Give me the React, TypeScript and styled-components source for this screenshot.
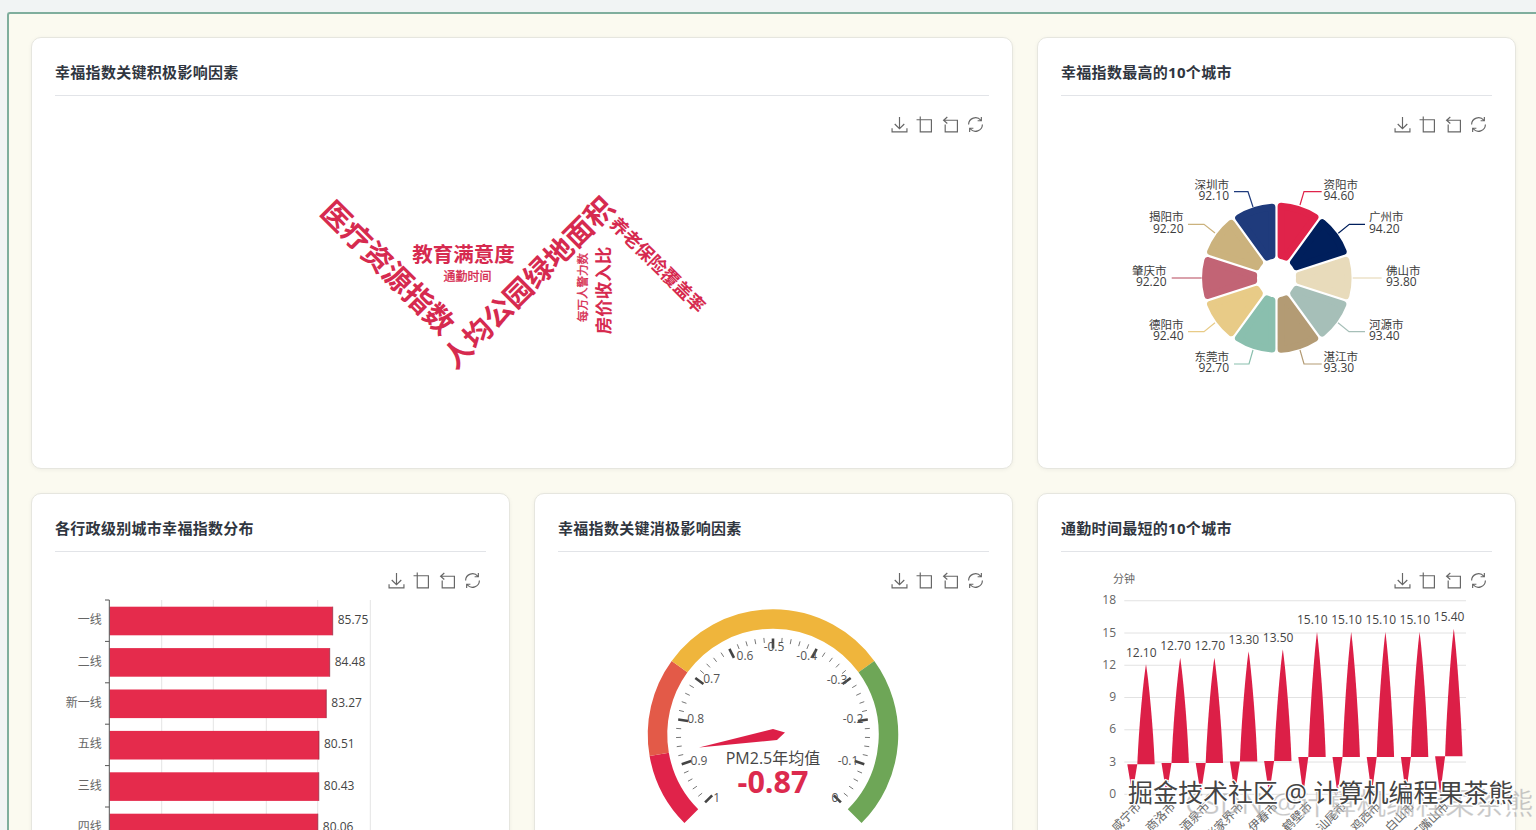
import styled, { createGlobalStyle } from 'styled-components';

const GlobalStyle = createGlobalStyle`
  html, body {
    margin: 0;
    height: 830px;
    overflow: hidden;
    background: #f1f4f4;
    font-family: "Open Sans", "Noto Sans CJK SC", sans-serif;
  }
`;

const Frame = styled.div`
  position: relative;
  margin: 12px 0 0 7px;
  height: 818px;
  overflow: hidden;
  background: #fbfaf0;
  border-top: 2px solid #7fae9d;
  border-left: 2px solid #7fae9d;
  border-top-left-radius: 3px;
  padding: 23px 20px 0 22px;
  box-sizing: border-box;
`;

const Grid = styled.div`
  display: grid;
  grid-template-columns: repeat(3, 479px);
  grid-auto-rows: 432px;
  gap: 24px;
`;

const Card = styled.section<{ $wide?: boolean }>`
  grid-column: ${(props) => (props.$wide ? 'span 2' : 'span 1')};
  background: #fff;
  border: 1px solid #e6e6df;
  border-radius: 10px;
  box-shadow: 0 1px 4px rgba(0, 0, 0, 0.05);
  padding: 0 23px;
  overflow: hidden;
`;

const Header = styled.h3`
  margin: 0;
  height: 58px;
  line-height: 69px;
  box-sizing: border-box;
  border-bottom: 1px solid #e2e4e8;
  font-size: 15px;
  letter-spacing: 0.3px;
  font-weight: 700;
  color: #303640;
`;

const ChartArea = styled.div`
  position: relative;
`;

const Plot = styled.svg`
  display: block;
`;

const Toolbox = styled.div`
  position: absolute;
  top: 20px;
  right: 5px;
  display: flex;
  gap: 8.5px;
`;

const ToolIcon = styled.svg`
  width: 17px;
  height: 17px;
  fill: none;
  stroke: #666;
  stroke-width: 1.1;
`;

const AxisText = styled.text`
  font-size: 12px;
  fill: #666;
`;

const UnitText = styled.text`
  font-size: 11px;
  fill: #666;
  text-anchor: middle;
  dominant-baseline: central;
`;

const GaugeTick = styled.text`
  font-size: 12px;
  fill: #555;
  text-anchor: middle;
  dominant-baseline: central;
`;

const ValueText = styled.text`
  font-size: 12px;
  fill: #444;
`;

const Word = styled.text<{ $size: number }>`
  font-size: ${(props) => props.$size}px;
  font-weight: ${(props) => (props.$size > 14 ? 700 : 400)};
  stroke: ${(props) => (props.$size > 14 ? 'none' : '#d62a4f')};
  stroke-width: 0.3px;
  fill: #d62a4f;
  text-anchor: middle;
  dominant-baseline: central;
`;

const PieName = styled.text`
  font-size: 11.5px;
  fill: #3c3c3c;
`;

const PieValue = styled.text`
  font-size: 12px;
  fill: #3c3c3c;
`;

const GaugeTitle = styled.text`
  font-size: 16px;
  fill: #464646;
  text-anchor: middle;
  dominant-baseline: central;
`;

const GaugeValue = styled.text`
  font-size: 30.5px;
  font-weight: 700;
  fill: #dc2a4e;
  text-anchor: middle;
  dominant-baseline: central;
`;

const WatermarkBack = styled.div`
  position: absolute;
  left: 1176px;
  top: 771px;
  font-size: 29.5px;
  line-height: 35px;
  white-space: nowrap;
  color: rgba(150, 150, 150, 0.55);
  -webkit-text-stroke: 0.4px rgba(255, 255, 255, 0.6);
`;

const WatermarkFront = styled.div`
  position: absolute;
  left: 1119px;
  top: 763px;
  font-size: 25px;
  line-height: 30px;
  white-space: nowrap;
  color: #444;
  -webkit-text-stroke: 2.5px #fff;
  paint-order: stroke fill;
`;

const Tools = () => (
  <Toolbox>
    <ToolIcon viewBox="0 0 16 16">
      <path d="M8 1v11M3.5 7.5 8 12l4.5-4.5M1 11.5 1 15h14v-3.5" />
    </ToolIcon>
    <ToolIcon viewBox="0 0 16 16">
      <path d="M0.5 3.5H14.5V15H4V0.5" />
    </ToolIcon>
    <ToolIcon viewBox="0 0 16 16">
      <path d="M5 1 1.5 4 5 7M1.5 4H14.5V15H3V8" />
    </ToolIcon>
    <ToolIcon viewBox="0 0 16 16">
      <path d="M1.5 8A6.5 6.5 0 0 1 13 4M14.5 8A6.5 6.5 0 0 1 3 12M13.5 1v3.5H10M2.5 15v-3.5H6" />
    </ToolIcon>
  </Toolbox>
);

const WORDS = [
  { text: '医疗资源指数', x: 388.5, y: 267, size: 29, rotate: 45 },
  { text: '人均公园绿地面积', x: 528, y: 282, size: 28.5, rotate: -45 },
  { text: '教育满意度', x: 463.5, y: 253.5, size: 20.5, rotate: 0 },
  { text: '通勤时间', x: 467.5, y: 276, size: 12, rotate: 0 },
  { text: '每万人警力数', x: 582.5, y: 287.5, size: 11.5, rotate: -90 },
  { text: '房价收入比', x: 602.5, y: 290.5, size: 17.5, rotate: -90 },
  { text: '养老保险覆盖率', x: 658, y: 264.5, size: 18, rotate: 45 },
];

const WordCloud = () => (
  <Plot width={934} height={373} viewBox="55 96 934 373">
    {WORDS.map((w) => (
      <Word key={w.text} $size={w.size} x={w.x} y={w.y} transform={`rotate(${w.rotate} ${w.x} ${w.y})`}>
        {w.text}
      </Word>
    ))}
  </Plot>
);

const PIE = [
  { name: '资阳市', value: '94.60', color: '#e0234a', line: '1300,205 1304,191.7 1321.7,191.7', lx: 1323.5, ly: 184, anchor: 'start' },
  { name: '广州市', value: '94.20', color: '#001f5c', line: '1338.3,233.3 1349.3,224.3 1365,224.3', lx: 1369, ly: 216.5, anchor: 'start' },
  { name: '佛山市', value: '93.80', color: '#e8dbbb', line: '1352.7,278 1381.7,278', lx: 1386, ly: 270, anchor: 'start' },
  { name: '河源市', value: '93.40', color: '#a6bfb8', line: '1338,322.7 1349,331.7 1365,331.7', lx: 1369, ly: 324, anchor: 'start' },
  { name: '湛江市', value: '93.30', color: '#b39b74', line: '1300,350 1304,364 1321.7,364', lx: 1323.5, ly: 356, anchor: 'start' },
  { name: '东莞市', value: '92.70', color: '#8abfae', line: '1253,350 1249,364 1234,364', lx: 1229, ly: 356, anchor: 'end' },
  { name: '德阳市', value: '92.40', color: '#e8cb87', line: '1215,322.7 1204,331.7 1188,331.7', lx: 1183.5, ly: 324, anchor: 'end' },
  { name: '肇庆市', value: '92.20', color: '#c26475', line: '1201.7,278 1171.7,278', lx: 1166.5, ly: 270, anchor: 'end' },
  { name: '揭阳市', value: '92.20', color: '#cbb27d', line: '1215,233 1204,224.3 1188,224.3', lx: 1183.5, ly: 216.5, anchor: 'end' },
  { name: '深圳市', value: '92.10', color: '#1f3b7c', line: '1253,207 1248,191.7 1234,191.7', lx: 1229, ly: 184, anchor: 'end' },
];

const PIE_X = 1276.5;
const PIE_Y = 278;

// polar point, 0deg at the top and going clockwise
const polar = (r: number, deg: number) => {
  const a = (deg * Math.PI) / 180;
  return `${(PIE_X + r * Math.sin(a)).toFixed(2)} ${(PIE_Y - r * Math.cos(a)).toFixed(2)}`;
};

// inset sector, the round stroke gives it the rounded corners
const petal = (start: number, end: number, outer: number) => {
  const d = 4.6;
  const inner = 23;
  const rOut = outer - 3.6;
  const inA = (Math.asin(d / inner) * 180) / Math.PI;
  const outA = (Math.asin(d / rOut) * 180) / Math.PI;
  return [
    `M${polar(inner, start + inA)}`,
    `L${polar(rOut, start + outA)}`,
    `A${rOut} ${rOut} 0 0 1 ${polar(rOut, end - outA)}`,
    `L${polar(inner, end - inA)}`,
    `A${inner} ${inner} 0 0 0 ${polar(inner, start + inA)}Z`,
  ].join('');
};

const RoseChart = () => (
  <Plot width={431} height={373} viewBox="1061 96 431 373">
    {PIE.map((p, i) => (
      <g key={p.name}>
        <polyline points={p.line} fill="none" stroke={p.color} strokeWidth="1.2" />
        <path
          d={petal(i * 36, (i + 1) * 36, 74.5 + (parseFloat(p.value) - 92.1) * 0.4)}
          fill={p.color}
          stroke={p.color}
          strokeWidth="7"
          strokeLinejoin="round"
        />
        <PieName x={p.lx} y={p.ly} textAnchor={p.anchor} dominantBaseline="central">
          {p.name}
        </PieName>
        <PieValue x={p.lx} y={p.ly + 11.5} textAnchor={p.anchor} dominantBaseline="central">
          {p.value}
        </PieValue>
      </g>
    ))}
  </Plot>
);

const BARS = [
  { name: '一线', value: '85.75', end: 332.7 },
  { name: '二线', value: '84.48', end: 329.7 },
  { name: '新一线', value: '83.27', end: 326.3 },
  { name: '五线', value: '80.51', end: 319 },
  { name: '三线', value: '80.43', end: 318.8 },
  { name: '四线', value: '80.06', end: 317.8 },
];

// second row charts use page coordinates as well, so the viewBox starts at y=552
const BarPlot = () => (
  <Plot width={431} height={373} viewBox="55 552 431 373">
    {[161.7, 213.3, 266.3, 317.7, 370.3].map((x) => (
      <line key={x} x1={x} x2={x} y1={600} y2={860} stroke="#e4e4e4" />
    ))}
    {BARS.map((b, i) => {
      const top = 606.7 + i * 41.4;
      return (
        <g key={b.name}>
          <rect x={109.5} y={top} width={b.end - 109.5} height={28.6} fill="#e52b4c" />
          <line x1={b.end} x2={b.end} y1={top} y2={top + 28.6} stroke="#8c2a40" strokeWidth="0.7" />
          <AxisText x={101.7} y={top + 13} textAnchor="end" dominantBaseline="central">
            {b.name}
          </AxisText>
          <ValueText x={b.end + 5} y={top + 13} dominantBaseline="central">
            {b.value}
          </ValueText>
        </g>
      );
    })}
    <line x1={109.3} x2={109.3} y1={600} y2={860} stroke="#555" />
    {[0, 1, 2, 3, 4, 5].map((i) => (
      <line key={i} x1={105} x2={109.3} y1={600 + i * 41.4} y2={600 + i * 41.4} stroke="#555" />
    ))}
  </Plot>
);

const GX = 773;
const GY = 734.5;

const xy = (r: number, deg: number) => {
  const a = (deg * Math.PI) / 180;
  return { x: GX + r * Math.cos(a), y: GY - r * Math.sin(a) };
};

const band = (from: number, to: number) => {
  const a = 225 - from * 270;
  const b = 225 - to * 270;
  const s = xy(115.5, a);
  const e = xy(115.5, b);
  const large = a - b > 180 ? 1 : 0;
  return `M${s.x} ${s.y}A115.5 115.5 0 ${large} 1 ${e.x} ${e.y}`;
};

const GAUGE_BANDS = [
  { from: 0, to: 0.13, color: '#e0234a' },
  { from: 0.13, to: 0.3, color: '#e35a48' },
  { from: 0.3, to: 0.7, color: '#efb53c' },
  { from: 0.7, to: 1, color: '#6ea657' },
];

const GAUGE_LABELS = [
  { text: '1', x: 716.7, y: 797 },
  { text: '0.9', x: 699, y: 760.7 },
  { text: '0.8', x: 695.7, y: 718 },
  { text: '0.7', x: 711.7, y: 678 },
  { text: '0.6', x: 745, y: 655.7 },
  { text: '-0.5', x: 774, y: 646 },
  { text: '-0.4', x: 806.7, y: 655.7 },
  { text: '-0.3', x: 837, y: 679 },
  { text: '-0.2', x: 853, y: 718 },
  { text: '-0.1', x: 848, y: 760.7 },
  { text: '0', x: 835, y: 797 },
];

const Gauge = () => (
  <Plot width={431} height={373} viewBox="558 552 431 373">
    {GAUGE_BANDS.map((b) => (
      <path key={b.color} d={band(b.from, b.to)} fill="none" stroke={b.color} strokeWidth="19.5" />
    ))}
    {Array.from({ length: 51 }, (_, i) => {
      const deg = 225 - i * 5.4;
      const major = i % 5 === 0;
      const a = xy(major ? 96 : 97, deg);
      const b = xy(major ? 86 : 92, deg);
      return (
        <line
          key={i}
          x1={a.x}
          y1={a.y}
          x2={b.x}
          y2={b.y}
          stroke={major ? '#444' : '#777'}
          strokeWidth={major ? 2.6 : 1}
        />
      );
    })}
    {GAUGE_LABELS.map((label) => (
      <GaugeTick key={label.text} x={label.x} y={label.y}>
        {label.text}
      </GaugeTick>
    ))}
    <polygon points="699,747.5 773,729 785,732.5 777,740" fill="#dd1f47" />
    <GaugeTitle x={773} y={757.5}>
      PM2.5年均值
    </GaugeTitle>
    <GaugeValue x={773} y={780.5}>
      -0.87
    </GaugeValue>
  </Plot>
);

const SPIKES = [
  { name: '咸宁市', value: 12.1 },
  { name: '商洛市', value: 12.7 },
  { name: '酒泉市', value: 12.7 },
  { name: '张家界市', value: 13.3 },
  { name: '伊春市', value: 13.5 },
  { name: '鹤壁市', value: 15.1 },
  { name: '汕尾市', value: 15.1 },
  { name: '鸡西市', value: 15.1 },
  { name: '白山市', value: 15.1 },
  { name: '石嘴山市', value: 15.4 },
];

const ZERO_Y = 794.3;
const UNIT = 32.26 / 3;

const spikePath = (cx: number, top: number, base: number) => {
  const h = base - top;
  return [
    `M${cx - 8.7} ${base}`,
    `C${cx - 7} ${base - h * 0.4} ${cx - 2.5} ${top + h * 0.15} ${cx} ${top}`,
    `C${cx + 2.5} ${top + h * 0.15} ${cx + 7} ${base - h * 0.4} ${cx + 8.7} ${base}Z`,
  ].join('');
};

const SpikeChart = () => (
  <Plot width={431} height={373} viewBox="1061 552 431 373">
    <UnitText x={1124} y={578}>
      分钟
    </UnitText>
    {[0, 3, 6, 9, 12, 15, 18].map((v) => (
      <g key={v}>
        <line x1={1124.3} x2={1466} y1={ZERO_Y - v * UNIT} y2={ZERO_Y - v * UNIT} stroke="#e2e2e2" />
        <AxisText x={1116} y={ZERO_Y - v * UNIT - 1} textAnchor="end" dominantBaseline="central">
          {v}
        </AxisText>
      </g>
    ))}
    {SPIKES.map((s, i) => {
      const cx = 1146 + i * 34.2;
      const top = ZERO_Y - s.value * UNIT;
      const base = ZERO_Y - s.value * UNIT * 0.23;
      const small = cx - 13.7;
      return (
        <g key={s.name}>
          <path d={spikePath(cx, top, base)} fill="#dc1f47" />
          <polygon points={`${small - 5},${base} ${small + 5},${base} ${small},${ZERO_Y}`} fill="#dc1f47" />
          <ValueText x={cx - 4.7} y={top - 12} textAnchor="middle" dominantBaseline="central">
            {s.value.toFixed(2)}
          </ValueText>
          <AxisText x={cx - 4} y={807} textAnchor="end" transform={`rotate(-45 ${cx - 4} 807)`}>
            {s.name}
          </AxisText>
        </g>
      );
    })}
  </Plot>
);

export default function App() {
  return (
    <>
      <GlobalStyle />
      <Frame>
        <Grid>
          <Card $wide>
            <Header>幸福指数关键积极影响因素</Header>
            <ChartArea>
              <Tools />
              <WordCloud />
            </ChartArea>
          </Card>
          <Card>
            <Header>幸福指数最高的10个城市</Header>
            <ChartArea>
              <Tools />
              <RoseChart />
            </ChartArea>
          </Card>
          <Card>
            <Header>各行政级别城市幸福指数分布</Header>
            <ChartArea>
              <Tools />
              <BarPlot />
            </ChartArea>
          </Card>
          <Card>
            <Header>幸福指数关键消极影响因素</Header>
            <ChartArea>
              <Tools />
              <Gauge />
            </ChartArea>
          </Card>
          <Card>
            <Header>通勤时间最短的10个城市</Header>
            <ChartArea>
              <Tools />
              <SpikeChart />
            </ChartArea>
          </Card>
        </Grid>
        <WatermarkBack>CSDN @计算机编程果茶熊</WatermarkBack>
        <WatermarkFront>掘金技术社区 @ 计算机编程果茶熊</WatermarkFront>
      </Frame>
    </>
  );
}
